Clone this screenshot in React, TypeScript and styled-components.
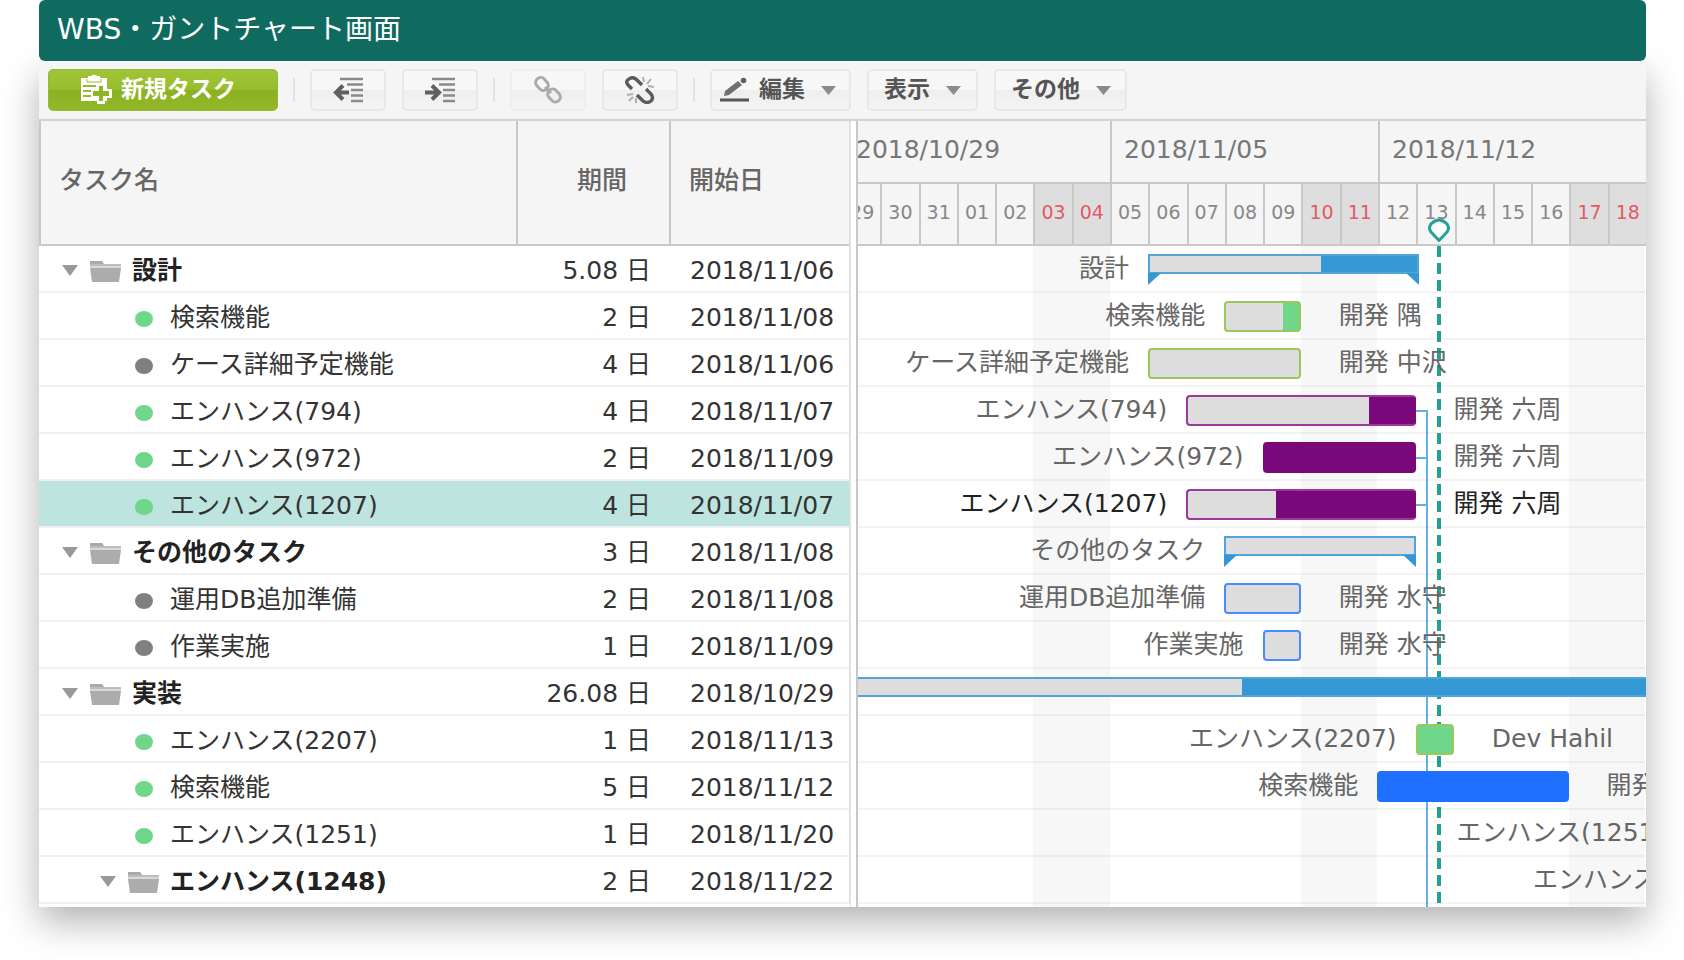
import React, { useState } from "react";
import styled, { createGlobalStyle, css } from "styled-components";

const DAYS = 21;
const ROW = 47;

const color = {
  brand: "#0f6b60",
  panel: "#f5f5f5",
  line: "#c8c8c8",
  rowLine: "#f1f1f1",
  text: "#333333",
  muted: "#666666",
  selected: "#bde4df",
  rest: "#dddddd",
  summary: "#3498d4",
  link: "#62b1e2",
  today: "#21a293",
};

const pct = (days: number) => `${(days / DAYS) * 100}%`;

/* ---------- data ---------- */

type Tone = "green" | "purple" | "blue";

interface Task {
  id: number;
  name: string;
  level: number;
  group?: boolean;
  dot?: "active" | "idle";
  duration: string;
  start: string;
  offset: number;
  span: number;
  remaining: number;
  tone?: Tone;
  owner?: string;
  linked?: boolean;
}

const tasks: Task[] = [
  { id: 1, name: "設計", level: 0, group: true, duration: "5.08", start: "2018/11/06", offset: 8, span: 7.1, remaining: 64 },
  { id: 2, name: "検索機能", level: 1, dot: "active", duration: "2", start: "2018/11/08", offset: 10, span: 2, remaining: 78, tone: "green", owner: "開発 隅" },
  { id: 3, name: "ケース詳細予定機能", level: 1, dot: "idle", duration: "4", start: "2018/11/06", offset: 8, span: 4, remaining: 100, tone: "green", owner: "開発 中沢" },
  { id: 4, name: "エンハンス(794)", level: 1, dot: "active", duration: "4", start: "2018/11/07", offset: 9, span: 6, remaining: 80, tone: "purple", owner: "開発 六周", linked: true },
  { id: 5, name: "エンハンス(972)", level: 1, dot: "active", duration: "2", start: "2018/11/09", offset: 11, span: 4, remaining: 0, tone: "purple", owner: "開発 六周", linked: true },
  { id: 6, name: "エンハンス(1207)", level: 1, dot: "active", duration: "4", start: "2018/11/07", offset: 9, span: 6, remaining: 39, tone: "purple", owner: "開発 六周", linked: true },
  { id: 7, name: "その他のタスク", level: 0, group: true, duration: "3", start: "2018/11/08", offset: 10, span: 5, remaining: 100 },
  { id: 8, name: "運用DB追加準備", level: 1, dot: "idle", duration: "2", start: "2018/11/08", offset: 10, span: 2, remaining: 100, tone: "blue", owner: "開発 水守" },
  { id: 9, name: "作業実施", level: 1, dot: "idle", duration: "1", start: "2018/11/09", offset: 11, span: 1, remaining: 100, tone: "blue", owner: "開発 水守" },
  { id: 10, name: "実装", level: 0, group: true, duration: "26.08", start: "2018/10/29", offset: 0, span: 36, remaining: 29 },
  { id: 11, name: "エンハンス(2207)", level: 1, dot: "active", duration: "1", start: "2018/11/13", offset: 15, span: 1, remaining: 0, tone: "green", owner: "Dev Hahil" },
  { id: 12, name: "検索機能", level: 1, dot: "active", duration: "5", start: "2018/11/12", offset: 14, span: 5, remaining: 0, tone: "blue", owner: "開発 水守" },
  { id: 13, name: "エンハンス(1251)", level: 1, dot: "active", duration: "1", start: "2018/11/20", offset: 22, span: 1, remaining: 0, tone: "green" },
  { id: 14, name: "エンハンス(1248)", level: 1, group: true, duration: "2", start: "2018/11/22", offset: 24, span: 2, remaining: 0 },
];

const weeks = ["2018/10/29", "2018/11/05", "2018/11/12"];
const days = [
  "29", "30", "31", "01", "02", "03", "04",
  "05", "06", "07", "08", "09", "10", "11",
  "12", "13", "14", "15", "16", "17", "18",
];

/* ---------- page ---------- */

const GlobalStyle = createGlobalStyle`
  *, *::before, *::after { box-sizing: border-box; }
  body {
    margin: 0;
    background: #ffffff;
    color: ${color.text};
    font: 25px/30px "DejaVu Sans", "Noto Sans CJK JP", sans-serif;
  }
  button { font: inherit; color: inherit; }
`;

const Page = styled.main`
  padding: 0 38px 53px 39px;
`;

const TitleBar = styled.header`
  position: relative;
  z-index: 1;
  height: 61px;
  padding: 0 18px 2px;
  display: flex;
  align-items: center;
  border-radius: 6px;
  background: ${color.brand};
  color: #ffffff;
`;

const Title = styled.h1`
  margin: 0;
  font-size: 28px;
  font-weight: 400;
  line-height: 40px;
`;

const Window = styled.section`
  background: #ffffff;
  box-shadow: 0 15px 35px rgba(0, 0, 0, 0.3);
`;

/* ---------- toolbar ---------- */

const Toolbar = styled.div`
  display: flex;
  align-items: center;
  gap: 16px;
  height: 58px;
  padding: 0 9px;
  background: ${color.panel};
`;

const Separator = styled.span`
  width: 2px;
  height: 24px;
  margin: 0 -1px;
  background: #e2e2e2;
`;

const ToolButton = styled.button<{ $width: number }>`
  display: flex;
  align-items: center;
  justify-content: center;
  gap: 9px;
  width: ${(p) => p.$width}px;
  height: 42px;
  padding: 0;
  border: 2px solid #e8e8e8;
  border-radius: 5px;
  background: linear-gradient(#f7f7f7 50%, #eeeeee 50%, #f4f4f4);
  color: #555555;
  font-size: 23px;
  font-weight: 700;
  cursor: pointer;

  &:disabled {
    border-color: #eeeeee;
    color: #aaaaaa;
    cursor: default;
  }
`;

const PrimaryButton = styled(ToolButton)`
  padding: 0 10px 2px 0;
  border: 1px solid #94b83a;
  background: linear-gradient(#a0c437, #97bd2d 50%, #8bb022 50%, #93b92a);
  color: #ffffff;
`;

const MenuButton = styled(ToolButton)`
  justify-content: flex-start;
  padding: 0 0 2px 15px;

  & > svg:last-child { margin: 3px 0 0 7px; }
`;

const EditButton = styled(MenuButton)`
  padding-left: 8px;
`;

/* ---------- panes ---------- */

const Panes = styled.div`
  display: grid;
  grid-template-columns: 811fr 6px 790fr;
  border-top: 2px solid #d3d3d3;
`;

const Splitter = styled.div`
  border-left: 1px solid #e2e2e2;
  background: #ffffff;
`;

const TaskTable = styled.table`
  width: 100%;
  table-layout: fixed;
  border-collapse: separate;
  border-spacing: 0;
  align-self: start;
  border-right: 1px solid #dedede;
`;

const HeadCell = styled.th<{ $width?: number; $end?: boolean }>`
  width: ${(p) => (p.$width ? `${p.$width}px` : "auto")};
  height: 125px;
  padding: 0 ${(p) => (p.$end ? 42 : 20)}px 3px ${(p) => (p.$end ? 0 : 18)}px;
  border-left: 2px solid ${color.line};
  border-bottom: 2px solid ${color.line};
  background: ${color.panel};
  color: ${color.muted};
  font-weight: 500;
  text-align: ${(p) => (p.$end ? "right" : "left")};
`;

const TaskRow = styled.tr<{ $selected: boolean }>`
  height: ${ROW}px;
  background: ${(p) => (p.$selected ? color.selected : "#ffffff")};
  cursor: default;
`;

const Cell = styled.td<{ $end?: boolean }>`
  height: ${ROW}px;
  padding: 4px ${(p) => (p.$end ? 18 : 0)}px 0 ${(p) => (p.$end ? 0 : 21)}px;
  border-bottom: 2px solid ${color.rowLine};
  text-align: ${(p) => (p.$end ? "right" : "left")};
  white-space: nowrap;
`;

const NameCell = styled(Cell)<{ $level: number }>`
  padding-left: ${(p) => 23 + p.$level * 38}px;
`;

const NameLine = styled.div`
  display: flex;
  align-items: center;
`;

const Toggle = styled.button`
  display: flex;
  width: 28px;
  height: 24px;
  padding: 0;
  border: 0;
  background: none;
  align-items: center;
  cursor: pointer;
`;

const GroupName = styled.span`
  margin-left: 11px;
  color: #222222;
  font-weight: 700;
`;

const LeafName = styled.span`
  margin-left: 17px;
`;

const Dot = styled.span<{ $active: boolean }>`
  width: 18px;
  height: 16px;
  margin: 3px 0 0 35px;
  border-radius: 50%;
  background: ${(p) => (p.$active ? "#70d68a" : "#808080")};
`;

/* ---------- timeline ---------- */

const Timeline = styled.div`
  display: flex;
  flex-direction: column;
  min-width: 0;
  overflow: hidden;
  border-left: 2px solid ${color.line};
`;

const TimeScale = styled.div`
  margin-left: -16px;
  height: 125px;
  border-bottom: 2px solid ${color.line};
  background: ${color.panel};
`;

const WeekRow = styled.div`
  display: grid;
  grid-template-columns: repeat(3, 1fr);
  height: 63px;
  border-bottom: 2px solid ${color.line};
`;

const Week = styled.div`
  display: flex;
  align-items: center;
  padding: 0 0 4px 12px;
  border-left: 2px solid ${color.line};
  color: #777777;
`;

const DayRow = styled.div`
  display: grid;
  grid-template-columns: repeat(${DAYS}, 1fr);
  height: 60px;
`;

const Day = styled.div<{ $weekend: boolean }>`
  display: flex;
  align-items: center;
  justify-content: center;
  padding-bottom: 4px;
  border-left: 2px solid ${color.line};
  background: ${(p) => (p.$weekend ? "#dedede" : color.panel)};
  color: ${(p) => (p.$weekend ? "#e25a66" : "#888888")};
  font-size: 19px;
`;

const Chart = styled.div`
  position: relative;
  flex: 1;
  margin: 0 1px 0 -16px;
  padding-bottom: 3px;
`;

const Weekend = styled.div<{ $from: number }>`
  position: absolute;
  top: 0;
  bottom: 0;
  left: ${(p) => pct(p.$from)};
  width: ${pct(2)};
  background: #f7f7f7;
`;

const LinkLine = styled.div`
  position: absolute;
  top: 164px;
  bottom: 0;
  left: calc(${pct(15)} + 10px);
  width: 2px;
  background: ${color.link};
`;

const TodayLine = styled.div`
  position: absolute;
  top: 0;
  bottom: 0;
  left: calc(${pct(15)} + 21px);
  width: 4px;
  background: repeating-linear-gradient(${color.today} 0 11px, transparent 11px 17px);
`;

const TodayPin = styled.svg`
  position: absolute;
  z-index: 3;
  top: -28px;
  left: calc(${pct(15)} + 11px);
`;

const ChartRow = styled.div<{ $selected: boolean }>`
  position: relative;
  display: flex;
  height: ${ROW}px;
  padding-top: 8px;
  border-bottom: 2px solid rgba(0, 0, 0, 0.045);
  color: ${(p) => (p.$selected ? "#222222" : color.muted)};
  white-space: nowrap;
`;

const BarLabel = styled.div<{ $days: number }>`
  flex: 0 0 ${(p) => pct(p.$days)};
  padding-right: 19px;
  text-align: right;
`;

const tones: Record<Tone, { edge: string; fill: string }> = {
  green: { edge: "#9cc75b", fill: "#70d68a" },
  purple: { edge: "#9c3a9c", fill: "#7b087b" },
  blue: { edge: "#4a8bff", fill: "#2070ff" },
};

const Bar = styled.div<{ $days: number; $tone: Tone; $remaining: number; $linked?: boolean }>`
  position: relative;
  flex: 0 0 ${(p) => pct(p.$days)};
  height: 31px;
  border: 2px solid ${(p) => (p.$remaining === 0 && p.$tone !== "green" ? tones[p.$tone].fill : tones[p.$tone].edge)};
  border-radius: 4px;
  background: linear-gradient(
    to right,
    ${color.rest} ${(p) => p.$remaining}%,
    ${(p) => tones[p.$tone].fill} ${(p) => p.$remaining}%
  );

  ${(p) =>
    p.$tone === "purple" &&
    css`
      border-right-color: ${tones.purple.fill};
    `}

  ${(p) =>
    p.$linked &&
    css`
      &::after {
        content: "";
        position: absolute;
        top: 13px;
        left: calc(100% + 2px);
        width: 11px;
        height: 2px;
        background: ${color.link};
      }
    `}
`;

const SummaryBar = styled.div<{ $days: number; $remaining: number }>`
  position: relative;
  flex: 0 0 ${(p) => pct(p.$days)};
  height: 20px;
  border: 2px solid #4ea5da;
  background: linear-gradient(
    to right,
    ${color.rest} ${(p) => p.$remaining}%,
    ${color.summary} ${(p) => p.$remaining}%
  );

  &::before,
  &::after {
    content: "";
    position: absolute;
    top: 17px;
    border-top: 12px solid ${color.summary};
  }
  &::before {
    left: -2px;
    border-right: 13px solid transparent;
  }
  &::after {
    right: -2px;
    border-left: 13px solid transparent;
  }
`;

const Owner = styled.div`
  margin-left: 38px;
`;

/* ---------- icons ---------- */

const Caret = ({ fill = "#8a8a8a", w = 15, h = 9 }: { fill?: string; w?: number; h?: number }) => (
  <svg width={w} height={h} viewBox="0 0 16 10" preserveAspectRatio="none" aria-hidden="true">
    <path d="M0 0H16L8 10Z" fill={fill} />
  </svg>
);

const FolderIcon = () => (
  <svg width="31" height="22" viewBox="0 0 31 22" aria-hidden="true">
    <path d="M0 1H12L14 4H31V7H0Z" fill="#bdbdbd" />
    <path d="M0 1H12L14 4H0Z" fill="#aaaaaa" />
    <path d="M0 6H31V8H0Z" fill="#d9d9d9" />
    <path d="M0 8H31L29 22H2Z" fill="#acacac" />
  </svg>
);

const ClipboardIcon = () => (
  <svg width="32" height="30" viewBox="0 0 32 30" aria-hidden="true">
    <path d="M1 4H8V2H11Q14 -1 17 2H20V4H27V27H1Z" fill="#ffffff" />
    <path d="M7 5V8H21V5" fill="none" stroke="#96bb2e" strokeWidth="1" />
    <path d="M3 12H16M3 17H13M3 22H13" stroke="#96bb2e" strokeWidth="2" />
    <path d="M17 10H25V15H32V24H25V30H17V24H11V15H17Z" fill="#ffffff" />
    <path d="M19 12H23V17H29V22H23V27H19V22H13V17H19Z" fill="#8fb427" />
  </svg>
);

const IndentIcon = ({ out }: { out?: boolean }) => (
  <svg width="30" height="26" viewBox="0 0 30 26" aria-hidden="true">
    <path d="M7 2H30M14 7.500H30M18 13H30M18 18.500H30M18 24H30" stroke="#8a8a8a" strokeWidth="2.400" />
    {out ? (
      <path d="M16 15.500H3M10 8.500L3 15.500L10 22.500" fill="none" stroke="#606060" strokeWidth="4" />
    ) : (
      <path d="M0 15.500H13M7 8.500L14 15.500L7 22.500" fill="none" stroke="#606060" strokeWidth="4" />
    )}
  </svg>
);

const LinkIcon = () => (
  <svg width="30" height="28" viewBox="0 0 30 28" fill="none" stroke="currentColor" strokeWidth="3" aria-hidden="true">
    <rect x="2" y="3" width="14" height="10" rx="5" transform="rotate(48 9 8)" />
    <rect x="14" y="14.500" width="14" height="10" rx="5" transform="rotate(48 21 19.500)" />
    <path d="M12 11L18 17" />
  </svg>
);

const UnlinkIcon = () => (
  <svg width="30" height="28" viewBox="0 0 30 28" fill="none" aria-hidden="true">
    <path d="M7 13L3 9Q0 5 4 3Q8 0 12 4L17 9" stroke="#5a5a5a" strokeWidth="3.400" />
    <path d="M12 19L18 25Q22 28 26 25Q29 22 26 18L21 13" stroke="#5a5a5a" strokeWidth="3.400" />
    <path d="M18 1L19 6M26 3L22 8M29 11L23 10M2 19L8 18M4 25L8 21M11 27V22" stroke="#b0b0b0" strokeWidth="2" />
  </svg>
);

const PencilIcon = () => (
  <svg width="30" height="25" viewBox="0 0 30 25" aria-hidden="true">
    <path d="M4 19L5 14L18 4L22 8L9 18Z" fill="#707070" />
    <circle cx="23.500" cy="3.500" r="2.800" fill="#606060" />
    <path d="M0 23H29" stroke="#555555" strokeWidth="3" />
  </svg>
);

/* ---------- app ---------- */

const isWeekend = (i: number) => i % 7 > 4;

export default function App() {
  const [selected, setSelected] = useState(6);

  return (
    <>
      <GlobalStyle />
      <Page>
        <TitleBar>
          <Title>WBS・ガントチャート画面</Title>
        </TitleBar>
        <Window>
          <Toolbar role="toolbar">
            <PrimaryButton $width={230} type="button">
              <ClipboardIcon />
              新規タスク
            </PrimaryButton>
            <Separator />
            <ToolButton $width={76} type="button" aria-label="レベルを上げる"><IndentIcon out /></ToolButton>
            <ToolButton $width={76} type="button" aria-label="レベルを下げる"><IndentIcon /></ToolButton>
            <Separator />
            <ToolButton $width={76} type="button" aria-label="リンク" disabled><LinkIcon /></ToolButton>
            <ToolButton $width={76} type="button" aria-label="リンク解除"><UnlinkIcon /></ToolButton>
            <Separator />
            <EditButton $width={141} type="button" aria-haspopup="menu">
              <PencilIcon />
              編集
              <Caret />
            </EditButton>
            <MenuButton $width={111} type="button" aria-haspopup="menu">
              表示
              <Caret />
            </MenuButton>
            <MenuButton $width={133} type="button" aria-haspopup="menu">
              その他
              <Caret />
            </MenuButton>
          </Toolbar>

          <Panes>
            <TaskTable>
              <thead>
                <tr>
                  <HeadCell>タスク名</HeadCell>
                  <HeadCell $width={153} $end>期間</HeadCell>
                  <HeadCell $width={180}>開始日</HeadCell>
                </tr>
              </thead>
              <tbody>
                {tasks.map((t) => (
                  <TaskRow key={t.id} $selected={t.id === selected} onClick={() => setSelected(t.id)}>
                    <NameCell $level={t.level}>
                      <NameLine>
                        {t.group ? (
                          <>
                            <Toggle type="button" aria-label={`${t.name}を折りたたむ`}>
                              <Caret fill="#999999" w={16} h={11} />
                            </Toggle>
                            <FolderIcon />
                            <GroupName>{t.name}</GroupName>
                          </>
                        ) : (
                          <>
                            <Dot $active={t.dot === "active"} />
                            <LeafName>{t.name}</LeafName>
                          </>
                        )}
                      </NameLine>
                    </NameCell>
                    <Cell $end>{t.duration} 日</Cell>
                    <Cell>{t.start}</Cell>
                  </TaskRow>
                ))}
              </tbody>
            </TaskTable>

            <Splitter />

            <Timeline>
              <TimeScale>
                <WeekRow>
                  {weeks.map((w) => (
                    <Week key={w}>{w}</Week>
                  ))}
                </WeekRow>
                <DayRow>
                  {days.map((d, i) => (
                    <Day key={i} $weekend={isWeekend(i)}>{d}</Day>
                  ))}
                </DayRow>
              </TimeScale>
              <Chart>
                <Weekend $from={5} />
                <Weekend $from={12} />
                <Weekend $from={19} />
                <LinkLine />
                <TodayLine />
                {tasks.map((t) => (
                  <ChartRow key={t.id} $selected={t.id === selected}>
                    {t.offset > 0 && <BarLabel $days={t.offset}>{t.name}</BarLabel>}
                    {t.tone ? (
                      <Bar $days={t.span} $tone={t.tone} $remaining={t.remaining} $linked={t.linked} />
                    ) : (
                      <SummaryBar $days={t.span} $remaining={t.remaining} />
                    )}
                    {t.owner && <Owner>{t.owner}</Owner>}
                  </ChartRow>
                ))}
                <TodayPin width="24" height="25" viewBox="0 0 24 25" aria-hidden="true">
                  <path
                    d="M12 22.500L4 14Q1 10 4 6Q8 2 12 2Q16 2 20 6Q23 10 20 14Z"
                    fill="#ffffff"
                    stroke={color.today}
                    strokeWidth="3"
                    strokeLinejoin="round"
                  />
                </TodayPin>
              </Chart>
            </Timeline>
          </Panes>
        </Window>
      </Page>
    </>
  );
}
